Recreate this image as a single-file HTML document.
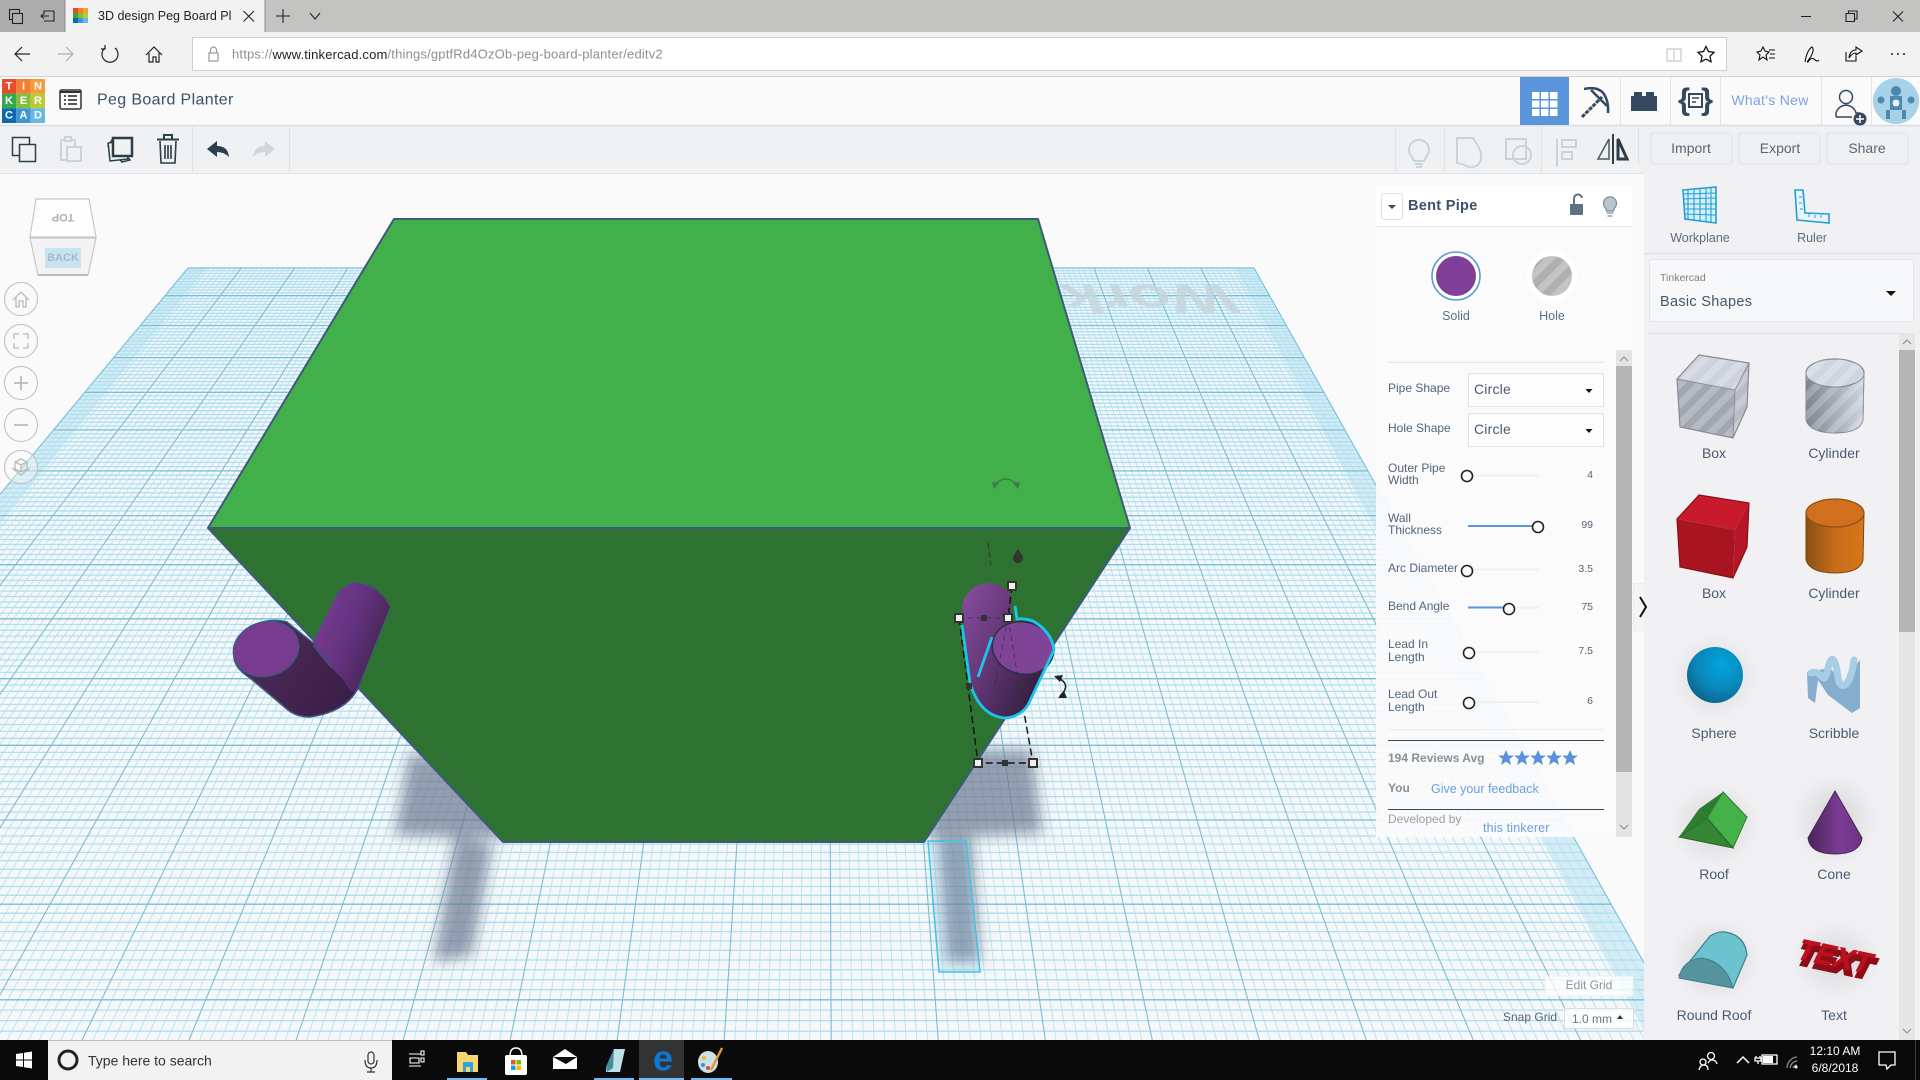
<!DOCTYPE html>
<html lang="en"><head><meta charset="utf-8"><title>3D design Peg Board Planter</title>
<style>
html,body{margin:0;padding:0;width:1920px;height:1080px;overflow:hidden;background:#fafafa}
svg#s{position:absolute;left:0;top:0;display:block}
text{font-family:"Liberation Sans",sans-serif;dominant-baseline:central;white-space:pre}
.c{text-anchor:middle}.r{text-anchor:end}
.lb{font-size:12px;fill:#54657a;transform:translateY(1px)}.v{font-size:10.5px;fill:#54657a;transform:translateY(1px)}
.sh{font-size:14px;fill:#4a5b70;text-anchor:middle}
.k{fill:#fff;stroke:#222;stroke-width:1.6}
.tr{stroke:#eeeff0;stroke-width:2}
.bl{stroke:#5b96dc;stroke-width:2}
.d{fill:none;stroke:#c9d3dc;stroke-width:2}
.tk{fill:none;stroke:#fff;stroke-width:1.3}
.ds{stroke:#111;stroke-width:1.4;stroke-dasharray:7 4;fill:none}
.h{fill:#eee;stroke:#333;stroke-width:2}
.b{fill:#333}
</style></head><body>
<svg id="s" width="1920" height="1080" viewBox="0 0 1920 1080" xmlns="http://www.w3.org/2000/svg">
<defs>
<filter id="bl" x="-30%" y="-30%" width="160%" height="160%"><feGaussianBlur stdDeviation="7"/></filter>
<filter id="gl" x="-50%" y="-50%" width="200%" height="200%"><feGaussianBlur stdDeviation="10"/></filter>
<pattern id="st" width="14" height="14" patternUnits="userSpaceOnUse" patternTransform="rotate(45)"><rect width="7" height="14" fill="#fff" fill-opacity=".22"/></pattern>
<pattern id="st2" width="15" height="15" patternUnits="userSpaceOnUse" patternTransform="rotate(45)"><rect width="15" height="15" fill="#b0b0b0"/><rect width="7.5" height="15" fill="#c4c4c4"/></pattern>
<linearGradient id="p1" x1="0" y1="0" x2="1" y2=".55"><stop offset="0" stop-color="#7e3f98"/><stop offset=".55" stop-color="#643380"/><stop offset="1" stop-color="#42244f"/></linearGradient>
<linearGradient id="p2" x1="0" y1="0" x2="1" y2=".6"><stop offset="0" stop-color="#54305f"/><stop offset="1" stop-color="#381d46"/></linearGradient>
<linearGradient id="p3" x1="0" y1="0" x2="1" y2=".7"><stop offset="0" stop-color="#8a4ea2"/><stop offset=".45" stop-color="#653878"/><stop offset="1" stop-color="#2f1d3a"/></linearGradient>
<linearGradient id="cy" x1="0" x2="1"><stop offset="0" stop-color="#7f8590"/><stop offset="1" stop-color="#cdd3df"/></linearGradient>
<linearGradient id="co" x1="0" x2="1"><stop offset="0" stop-color="#8a4f14"/><stop offset=".5" stop-color="#c56d1b"/><stop offset="1" stop-color="#d8761a"/></linearGradient>
<linearGradient id="cn" x1="0" x2="1"><stop offset="0" stop-color="#4a2459"/><stop offset=".6" stop-color="#7b3d94"/><stop offset="1" stop-color="#6a3380"/></linearGradient>
<radialGradient id="sp" cx=".62" cy=".32" r=".75"><stop offset="0" stop-color="#00a6de"/><stop offset=".6" stop-color="#0a86b8"/><stop offset="1" stop-color="#0c5f88"/></radialGradient>
<polygon id="star" points="0,-8 2.4,-2.5 7.8,-2.5 3.5,1.2 5,7 0,3.7 -5,7 -3.5,1.2 -7.8,-2.5 -2.4,-2.5" fill="#5b93d9"/>
</defs>

<!-- workplane grid -->
<polygon points="188,268 1254,268 1687,1040 -453,1040" fill="#f6f7f8"/>
<polygon points="188,268 207,268 -415,1040 -453,1040" fill="#8fd6ee" fill-opacity=".32"/>
<polygon points="1235,268 1254,268 1687,1040 1649,1040" fill="#8fd6ee" fill-opacity=".32"/>
<path id="gv" fill="none" stroke="#bce5f2" stroke-width="1"/>
<path id="gh" fill="none" stroke="#b0dfef" stroke-width="1.300"/>
<path id="gvm" fill="none" stroke="#78bfd8" stroke-width="1.100"/>
<path id="ghm" fill="none" stroke="#78bfd8" stroke-width="1.300"/>
<text transform="matrix(-.96,0,-.23,-.56,1230,285)" font-size="72" font-weight="bold" fill="#c6d3da" fill-opacity=".8" style="dominant-baseline:alphabetic">Workplane</text>

<!-- shadows on plane -->
<g fill="#65748c" fill-opacity=".68" filter="url(#bl)">
<polygon points="410,752 395,835 510,838 470,770"/>
<polygon points="455,835 492,845 472,955 434,962"/>
<polygon points="955,750 1032,750 1042,833 925,838"/>
<polygon points="938,838 972,838 980,962 946,962"/>
</g>
<polygon points="928,841 966,841 980,972 939,972" fill="#78c8eb" fill-opacity=".14" stroke="#3cc4ea" stroke-width="1.5"/>

<!-- green box -->
<polygon points="394,219 1038,219 1130,528 208,528" fill="#42b04a" stroke="#3f5a7c" stroke-width="2" stroke-linejoin="round"/>
<polygon points="208,528 1130,528 924,842 503,842" fill="#2d7230" stroke="#3f5a7c" stroke-width="2" stroke-linejoin="round"/>

<!-- left pipe -->
<path d="M337,595Q345,583 357,583Q380,586 390,607L357,690Q345,712 310,717Q297,717 288,710L250,678Q233,667 234,655Q236,632 256,624Q272,618 287,622L313,643Z" fill="url(#p2)" stroke="#3f5a7c" stroke-width="1.5"/>
<path d="M337,595Q345,583 357,583Q380,586 390,607L357,690Q350,695 345,682L331,667L313,643Z" fill="url(#p1)"/>
<ellipse cx="266" cy="649" rx="33" ry="27" transform="rotate(-16 266 649)" fill="#783b90" stroke="#3f5a7c" stroke-width="1.4"/>
<path d="M313,645L331,667" stroke="#3f5a7c" stroke-width="1.4"/>

<!-- selected pipe -->
<path d="M962,605Q968,584 988,583Q1005,584 1012,597L1010,625L1050,662L1028,705Q1020,717 1005,718Q980,717 970,683Z" fill="url(#p3)"/>
<ellipse cx="1023" cy="648" rx="31" ry="26" transform="rotate(14 1023 648)" fill="#7f4496" stroke="#2b2f4a" stroke-width="1.5"/>
<path d="M962,625L970,683Q980,716 1005,718Q1020,717 1028,705L1054,650Q1052,632 1033,621Q1024,618 1017,619L1015,606M992,637L978,677" fill="none" stroke="#19c6ec" stroke-width="2.800"/>
<g fill="none" stroke="#3a2347" stroke-width="1" stroke-dasharray="5 4" stroke-opacity=".7"><path d="M959,618H1008M1008,618L994,690M1008,618L1020,690"/></g>
<path class="ds" d="M959,618L978,763H1033L1024,712M1012,586L1008,618"/>
<path d="M988,543L991,565" stroke="#333" stroke-width="1" stroke-dasharray="6 3"/>
<path d="M1018,549Q1013,556 1013,558a5,5 0 0 0 10,0Q1023,556 1018,549Z" fill="#333"/>
<path d="M994,486Q1006,472 1018,486" fill="none" stroke="#3f7a4a" stroke-width="1.5"/><path d="M992,482l7,1-5,6zM1020,482l-7,1 5,6z" fill="#3f7a4a"/>
<path d="M1056,677Q1073,684 1060,696" fill="none" stroke="#222" stroke-width="1.5"/><path d="M1054,676l9,-1-3,7zM1058,698l6,-7 3,7z" fill="#222"/>
<g class="h"><rect x="955" y="614" width="8" height="8"/><rect x="1004" y="614" width="8" height="8"/><rect x="1008" y="582" width="8" height="8"/><rect x="974" y="759" width="8" height="8"/><rect x="1029" y="759" width="8" height="8"/></g>
<g class="b"><rect x="981" y="615" width="6" height="6"/><rect x="966" y="683" width="6" height="6"/><rect x="1016" y="683" width="6" height="6"/><rect x="1002" y="760" width="6" height="6"/></g>

<!-- left nav -->
<path d="M36,199H89L96,237H30Z" fill="#fdfdfd" stroke="#c8c8c8" stroke-width="1.2"/>
<path d="M30,238H96L88,275H38Z" fill="#f3f3f3" stroke="#c8c8c8" stroke-width="1.2"/><path d="M38,275H88" stroke="#bbb" stroke-width="2"/>
<rect x="45" y="248" width="36" height="20" fill="#c8e4f2"/>
<text x="63" y="217" class="c" font-size="11" font-weight="bold" fill="#aab0b8" transform="rotate(180 63 217)">TOP</text>
<text x="63" y="258" class="c" font-size="11" font-weight="bold" fill="#a8b8c6">BACK</text>
<g fill="#fafafa" fill-opacity=".4" stroke="#bcbcbc" stroke-width="1"><circle cx="21" cy="299" r="16.5"/><circle cx="21" cy="341" r="16.5"/><circle cx="21" cy="383" r="16.5"/><circle cx="21" cy="425" r="16.5"/><circle cx="21" cy="467" r="16.5"/></g>
<g fill="none" stroke="#bbb" stroke-width="1.3"><path d="M13,300L21,292L29,300M16,298V307H19V301H23V307H26V298"/><path d="M14,339V334H19M23,334H28V339M28,343V348H23M19,348H14V343"/><path d="M14,383H28M21,376V390" stroke-width="1.8"/><path d="M14,425H28" stroke-width="1.8"/><path d="M21,459L27,462V469L21,472L15,469V462ZM15,462L21,465L27,462M21,465V472M12,468L21,475L30,468"/></g>

<!-- Edit grid / snap -->
<rect x="1545" y="976" width="88" height="20" rx="2" fill="#fff" fill-opacity=".75" stroke="#f0f0f0"/>
<text x="1589" y="985" class="c" font-size="12" fill="#8a96a4">Edit Grid</text>
<text x="1503" y="1017" font-size="12" fill="#54657a">Snap Grid</text>
<rect x="1564.5" y="1008.5" width="69" height="20" fill="#fff" fill-opacity=".8" stroke="#ddd"/>
<text x="1572" y="1019" font-size="12" fill="#6a7684">1.0 mm</text><path d="M1617,1019l3,-4 3,4z" fill="#333"/>

<!-- inspector -->
<rect x="1376" y="186" width="256" height="651" fill="#fbfbfc" fill-opacity=".93"/>
<rect x="1376" y="186" width="256" height="40" fill="#fff"/><path d="M1376,226.5H1632" stroke="#e2e4e8"/>
<rect x="1381.5" y="193.5" width="21" height="26" rx="3" fill="#fff" stroke="#dfe1e5"/>
<path d="M1388,205h8l-4,4z" fill="#34495e"/>
<text x="1408" y="206" font-size="14.5" font-weight="bold" fill="#3c5068" letter-spacing=".3">Bent Pipe</text>
<rect x="1570" y="204" width="13" height="11" rx="1" fill="#5d7285"/><path d="M1574,204V199a4,4 0 0 1 8,-1" fill="none" stroke="#5d7285" stroke-width="2"/>
<path d="M1605.500,208a6.500,6.500 0 1 1 9,0l-1,3h-7ZM1606.500,213h7M1607.500,216h5" fill="#b9c4cc" stroke="#7a8a98" stroke-width="1.200"/>
<circle cx="1456" cy="276" r="24" fill="#fff" stroke="#5b96dc" stroke-width="1.6"/><circle cx="1456" cy="276" r="20" fill="#7f3f98"/>
<circle cx="1552" cy="276" r="25" fill="#fff"/><circle cx="1552" cy="276" r="20" fill="url(#st2)"/>
<text x="1456" y="316" class="c" font-size="12.5" fill="#5f6f80">Solid</text><text x="1552" y="316" class="c" font-size="12.5" fill="#5f6f80">Hole</text>
<path d="M1388,362.5H1604" stroke="#e5e6e8"/>
<text x="1388" y="387" class="lb">Pipe Shape</text><text x="1388" y="427" class="lb">Hole Shape</text>
<rect x="1468.5" y="373.5" width="135" height="33" fill="#fff" fill-opacity=".6" stroke="#dfe2e8"/><rect x="1468.5" y="413.5" width="135" height="33" fill="#fff" fill-opacity=".6" stroke="#dfe2e8"/>
<text x="1474" y="389" font-size="14" fill="#4a5b70" letter-spacing=".2">Circle</text><text x="1474" y="429" font-size="14" fill="#4a5b70" letter-spacing=".2">Circle</text>
<path d="M1585.500,389h7l-3.500,4zM1585.500,429h7l-3.500,4z" fill="#111"/>
<g><text x="1388" y="467" class="lb">Outer Pipe</text><text x="1388" y="479" class="lb">Width</text><text x="1388" y="517" class="lb">Wall</text><text x="1388" y="529" class="lb">Thickness</text><text x="1388" y="567" class="lb">Arc Diameter</text><text x="1388" y="605" class="lb">Bend Angle</text><text x="1388" y="643" class="lb">Lead In</text><text x="1388" y="656" class="lb">Length</text><text x="1388" y="693" class="lb">Lead Out</text><text x="1388" y="706" class="lb">Length</text></g>
<g class="tr"><path d="M1468,475.500H1538M1468,526H1538M1468,569.500H1538M1468,607.500H1538M1468,652H1538M1468,702H1538"/></g>
<g class="bl"><path d="M1468,526H1534M1468,607.500H1504"/></g>
<g class="k"><circle cx="1467" cy="476" r="5.500"/><circle cx="1538" cy="527" r="5.500"/><circle cx="1467" cy="571" r="5.500"/><circle cx="1509" cy="609" r="5.500"/><circle cx="1469" cy="653" r="5.500"/><circle cx="1469" cy="703" r="5.500"/></g>
<g><text x="1593" y="474" class="r v">4</text><text x="1593" y="524" class="r v">99</text><text x="1593" y="568" class="r v">3.5</text><text x="1593" y="606" class="r v">75</text><text x="1593" y="650" class="r v">7.5</text><text x="1593" y="700" class="r v">6</text></g>
<path d="M1388,729.500H1604" stroke="#ecedef"/><path d="M1388,740.500H1604M1388,809.500H1604" stroke="#34495e"/>
<text x="1388" y="758" font-size="12" font-weight="bold" fill="#8a9097">194 Reviews Avg</text>
<use href="#star" x="1506" y="758"/><use href="#star" x="1522" y="758"/><use href="#star" x="1538" y="758"/><use href="#star" x="1554" y="758"/><use href="#star" x="1570" y="758"/>
<text x="1388" y="788" font-size="12" font-weight="bold" fill="#8a9097">You</text>
<text x="1431" y="789" font-size="12.500" fill="#6a9fe0">Give your feedback</text>
<text x="1388" y="819" font-size="12" fill="#9a9ea5">Developed by</text>
<text x="1483" y="828" font-size="12.500" fill="#6a9fe0" letter-spacing=".15">this tinkerer</text>
<rect x="1616" y="350" width="16" height="487" fill="#e4e4e4"/><rect x="1616" y="366" width="16" height="406" fill="#b5b5b5"/>
<path d="M1620,361l4,-4 4,4M1620,825l4,4 4,-4" fill="none" stroke="#8a8a8a"/>
<rect x="1634" y="584" width="16" height="47" fill="#f5f5f7" stroke="#e4e4e6"/>

<!-- right sidebar -->
<rect x="1644" y="173" width="276" height="867" fill="#f1f1f4"/>
<rect x="1634" y="584" width="10" height="47" fill="#f5f5f7"/><path d="M1640,597L1646,607L1640,617" fill="none" stroke="#111" stroke-width="2"/>
<path d="M1644,253.500H1920M1649,333.500H1899" stroke="#dfe0e3"/>
<g fill="none" stroke="#1fa0d6" stroke-width="1.1"><path d="M1683,190L1716,187V223L1685,219Z" fill="#d8eef8" stroke-width="1.600"/><path d="M1683,194L1716,193M1683,199L1716,198M1684,204L1716,204M1684,209L1716,209M1684,214L1716,215M1688,190V219M1694,189V220M1700,188V221M1706,188V222M1711,188V222"/></g>
<path d="M1795,190H1803L1805,213L1829,214V223L1797,220Z" fill="#e8f5fb" stroke="#1fa0d6" stroke-width="1.600"/><path d="M1799,197h3M1799,203h3M1800,209h3M1809,214v3M1815,215v3M1821,215v3" stroke="#1fa0d6"/>
<text x="1700" y="238" class="c" font-size="12.500" fill="#5b6d80">Workplane</text><text x="1812" y="238" class="c" font-size="12.500" fill="#5b6d80">Ruler</text>
<rect x="1649.500" y="259.500" width="264" height="62" rx="3" fill="#f7f8f9" stroke="#e4e5e8"/>
<text x="1660" y="278" font-size="10.500" fill="#7f7f7f">Tinkercad</text>
<text x="1660" y="302" font-size="14.500" fill="#45566a" letter-spacing=".3">Basic Shapes</text>
<path d="M1886,291h10l-5,5z" fill="#111"/>
<rect x="1899" y="333" width="16" height="707" fill="#e6e6e6"/><rect x="1899" y="350" width="16" height="282" fill="#b5b5b5"/>
<path d="M1903,344l4,-4 4,4M1903,1029l4,4 4,-4" fill="none" stroke="#8a8a8a"/>

<!-- shapes -->
<polygon points="1699,355 1749,363 1735,390 1677,379" fill="#cdd2dd"/><polygon points="1677,379 1735,390 1733,438 1680,427" fill="#a2a7b2"/><polygon points="1735,390 1749,363 1747,407 1733,438" fill="#b8bdc8"/>
<polygon points="1699,355 1749,363 1747,407 1733,438 1680,427 1677,379" fill="url(#st)" stroke="#858a94" stroke-width="1.200"/><path d="M1677,379L1735,390L1749,363M1735,390L1733,438" fill="none" stroke="#8a8f99"/>
<path d="M1806,373V420Q1810,433 1835,433Q1860,433 1863,420L1864,373Z" fill="url(#cy)" stroke="#7f848e"/><path d="M1806,373V420Q1810,433 1835,433Q1860,433 1863,420L1864,373Z" fill="url(#st)"/>
<ellipse cx="1835" cy="373" rx="29" ry="14" fill="#d0d5e0" stroke="#858a94" stroke-width="1.200"/><ellipse cx="1835" cy="373" rx="29" ry="14" fill="url(#st)"/>
<polygon points="1699,495 1749,503 1735,530 1677,519" fill="#c81a2b"/><polygon points="1677,519 1735,530 1733,578 1680,567" fill="#a8141f"/><polygon points="1735,530 1749,503 1747,547 1733,578" fill="#b41725"/>
<polygon points="1699,495 1749,503 1747,547 1733,578 1680,567 1677,519" fill="none" stroke="#8d0f1a" stroke-width="1.200"/>
<path d="M1806,513V560Q1810,573 1835,573Q1860,573 1863,560L1864,513Z" fill="url(#co)" stroke="#7a4512"/><ellipse cx="1835" cy="513" rx="29" ry="14" fill="#d0701c" stroke="#8a4f14" stroke-width="1.200"/>
<text x="1714" y="453" class="sh">Box</text><text x="1834" y="453" class="sh">Cylinder</text><text x="1714" y="593" class="sh">Box</text><text x="1834" y="593" class="sh">Cylinder</text>
<g fill="#000" fill-opacity=".08" filter="url(#gl)"><circle cx="1715" cy="677" r="30"/><ellipse cx="1715" cy="825" rx="32" ry="30"/><ellipse cx="1835" cy="820" rx="30" ry="34"/><ellipse cx="1715" cy="960" rx="32" ry="30"/><ellipse cx="1836" cy="960" rx="32" ry="26"/></g>
<circle cx="1715" cy="675" r="28" fill="url(#sp)"/>
<polygon points="1807,672 1808,698 1815,703 1818,680 1828,695 1852,713 1860,708 1860,660 1852,670 1845,685 1830,668" fill="#86adcd"/>
<path d="M1811,673C1822,668 1824,690 1828,668C1832,652 1836,660 1838,678C1840,690 1850,690 1854,660" fill="none" stroke="#a8cde6" stroke-width="7" stroke-linecap="round"/>
<polygon points="1723,792 1747,817 1733,848 1707,818" fill="#44b14a" stroke="#2d7a30"/><polygon points="1723,792 1707,818 1699,809" fill="#2d7a30"/><polygon points="1679,837 1707,818 1733,848" fill="#368535" stroke="#256628"/><polygon points="1699,809 1707,818 1679,837" fill="#2f7d32"/>
<path d="M1835,791L1808,838Q1810,854 1835,854Q1860,854 1862,838Z" fill="url(#cn)" stroke="#4a2459"/>
<path d="M1679,975L1710,936Q1718,931 1725,932Q1745,935 1747,955L1733,988L1680,978Z" fill="#6cc3cf" stroke="#3f7f8c" stroke-width="1.200"/>
<path d="M1679,978Q1682,960 1702,958Q1726,962 1733,988Z" fill="#55939f" stroke="#3f7f8c"/>
<text transform="translate(1836,962) rotate(12) skewX(-15)" class="c" font-size="29" font-weight="bold" fill="#8d0c16" stroke="#8d0c16" stroke-width="4">TEXT</text>
<text transform="translate(1835,957) rotate(12) skewX(-15)" class="c" font-size="29" font-weight="bold" fill="#bb1020" stroke="#bb1020" stroke-width=".8">TEXT</text>
<text x="1714" y="733" class="sh">Sphere</text><text x="1834" y="733" class="sh">Scribble</text><text x="1714" y="874" class="sh">Roof</text><text x="1834" y="874" class="sh">Cone</text><text x="1714" y="1015" class="sh">Round Roof</text><text x="1834" y="1015" class="sh">Text</text>

<!-- toolbar -->
<rect x="0" y="126" width="1920" height="47" fill="#f0f1f3"/><path d="M0,173.500H1644" stroke="#e2e3e6"/>
<path d="M192.500,126V173M289.500,126V173M1395.500,126V173M1444.500,126V173M1541.500,126V173M1638.500,126V165" stroke="#e0e2e6"/>
<g fill="#f0f1f3" stroke="#2c3e46" stroke-width="1.500"><rect x="12.500" y="137.500" width="17" height="18"/><rect x="19.500" y="144.500" width="16" height="17"/></g>
<g fill="#f0f1f3" stroke="#c9d3dc" stroke-width="2"><rect x="61" y="140" width="14" height="20"/><rect x="67" y="147" width="14" height="14"/><rect x="65" y="137" width="6" height="4"/></g>
<g fill="#f0f1f3" stroke="#2c3e46"><path d="M108,146L122,162L130,160L112,140Z" stroke-width="1.500"/><rect x="109" y="142" width="18" height="18" stroke-width="1.500" transform="rotate(-6 118 151)"/><rect x="113" y="138" width="19" height="18" stroke-width="2.500"/></g>
<g fill="none" stroke="#2c3e46" stroke-width="2"><path d="M157,139.500H179M164,139V135H172V139"/><path d="M160,141L161,163H175L176,141M165,145V159M168,145V159M171,145V159" stroke-width="1.600"/></g>
<path d="M207,149L217,141V146Q228,146 229,157Q224,152 217,152V157Z" fill="#2c3e50"/>
<path d="M275,149L265,141V146Q254,146 253,157Q258,152 265,152V157Z" fill="#cfd8df"/>
<path d="M1412,157a10,10 0 1 1 14,0l-2,4h-10ZM1415,164h8M1416,167h6" class="d"/>
<path d="M1457,138H1473Q1481,150 1481,155A10,10 0 0 1 1465,165L1457,163Z" class="d"/>
<rect x="1506" y="139" width="20" height="20" class="d"/><circle cx="1522" cy="155" r="9" class="d" fill="#f0f1f3"/>
<path d="M1557,139V167" class="d"/><rect x="1562" y="140" width="14" height="7" class="d"/><rect x="1562" y="152" width="10" height="7" class="d"/>
<path d="M1598,159H1609V139Z" fill="none" stroke="#4a5a62" stroke-width="1.500"/><path d="M1613,134V164" stroke="#2c3e46" stroke-width="2"/><path d="M1618,139V159H1627Z" fill="none" stroke="#2c3e46" stroke-width="3"/>
<g fill="#f0f1f3" stroke="#e0e2e6"><rect x="1651" y="133" width="81" height="31" rx="3"/><rect x="1739" y="133" width="81" height="31" rx="3"/><rect x="1827" y="133" width="81" height="31" rx="3"/></g>
<g font-size="14" fill="#5a6775"><text x="1691" y="148" class="c">Import</text><text x="1780" y="148" class="c">Export</text><text x="1867" y="148" class="c">Share</text></g>

<!-- tinkercad header -->
<rect x="0" y="76" width="1920" height="50" fill="#fafafa"/><path d="M0,76.500H1920" stroke="#d4d4d4"/><path d="M0,125.500H1920" stroke="#dcdde1" stroke-width="1.500"/>
<g font-size="11" font-weight="bold" fill="#fff">
<rect x="2" y="79" width="14.300" height="14.600" fill="#ea4a2b"/><rect x="16.300" y="79" width="14.300" height="14.600" fill="#f47e31"/><rect x="30.600" y="79" width="14.400" height="14.600" fill="#f59c3c"/>
<rect x="2" y="93.600" width="14.300" height="14.600" fill="#35a84a"/><rect x="16.300" y="93.600" width="14.300" height="14.600" fill="#82bf40"/><rect x="30.600" y="93.600" width="14.400" height="14.600" fill="#b6cc2f"/>
<rect x="2" y="108.200" width="14.300" height="14.800" fill="#0c68b0"/><rect x="16.300" y="108.200" width="14.300" height="14.800" fill="#3f97d0"/><rect x="30.600" y="108.200" width="14.400" height="14.800" fill="#6ab7e0"/>
<text x="9" y="86.500" class="c">T</text><text x="23.500" y="86.500" class="c">I</text><text x="38" y="86.500" class="c">N</text><text x="9" y="101" class="c">K</text><text x="23.500" y="101" class="c">E</text><text x="38" y="101" class="c">R</text><text x="9" y="115.500" class="c">C</text><text x="23.500" y="115.500" class="c">A</text><text x="38" y="115.500" class="c">D</text></g>
<rect x="60" y="90" width="21" height="19" rx="1.500" fill="none" stroke="#333" stroke-width="1.500"/><path d="M60,92H81" stroke="#333" stroke-width="2"/><path d="M64,96h2M68,96h9M64,100h2M68,100h9M64,104h2M68,104h9" stroke="#222" stroke-width="1.600"/>
<text x="97" y="100" font-size="16" fill="#3c5068" letter-spacing=".35">Peg Board Planter</text>
<rect x="1520" y="77" width="49" height="48" fill="#5b96dc"/>
<g fill="#fff"><rect x="1532" y="92" width="7.500" height="7"/><rect x="1541" y="92" width="7.500" height="7"/><rect x="1550" y="92" width="7.500" height="7"/><rect x="1532" y="100.500" width="7.500" height="7"/><rect x="1541" y="100.500" width="7.500" height="7"/><rect x="1550" y="100.500" width="7.500" height="7"/><rect x="1532" y="109" width="7.500" height="7"/><rect x="1541" y="109" width="7.500" height="7"/><rect x="1550" y="109" width="7.500" height="7"/></g>
<path d="M1620.500,77V125M1670.500,77V125M1720.500,77V125M1821.500,77V125M1871.500,77V125" stroke="#e3e4e7"/>
<path d="M1582,117L1602,97" stroke="#34495e" stroke-width="3" stroke-dasharray="4 1"/><path d="M1584,89Q1598,86 1604,94Q1609,102 1608,113M1591,90L1607,106" fill="none" stroke="#34495e" stroke-width="2.500"/>
<g fill="#34495e"><rect x="1631" y="96" width="26" height="15"/><rect x="1634" y="92" width="8" height="5"/><rect x="1646" y="92" width="8" height="5"/></g>
<text x="1684" y="99" class="c" font-size="31" font-weight="bold" fill="#34495e">{</text><text x="1707" y="99" class="c" font-size="31" font-weight="bold" fill="#34495e">}</text>
<rect x="1689" y="94" width="13" height="13" fill="none" stroke="#34495e" stroke-width="2"/><path d="M1692,98h7M1692,102h4" stroke="#34495e" stroke-width="1.500"/>
<text x="1770" y="100" class="c" font-size="14" fill="#7ba3e6" letter-spacing=".3">What's New</text>
<circle cx="1846" cy="97" r="6.500" fill="none" stroke="#34495e" stroke-width="1.500"/><path d="M1836,117V113Q1838,106 1846,105Q1854,106 1856,113H1860M1836,117H1852" fill="none" stroke="#34495e" stroke-width="1.500"/>
<circle cx="1860" cy="119" r="6.500" fill="#34495e"/><path d="M1860,115v8M1856,119h8" stroke="#fff" stroke-width="1.500"/>
<circle cx="1896" cy="101" r="23" fill="#a6d3e8"/>
<g fill="#2f6f9e" fill-opacity=".75"><circle cx="1896" cy="91" r="5"/><rect x="1890" y="96" width="12" height="14"/><circle cx="1881" cy="100" r="3.500"/><circle cx="1911" cy="100" r="3.500"/><rect x="1886" y="110" width="4" height="9"/><rect x="1902" y="110" width="4" height="9"/></g><circle cx="1896" cy="103" r="3.500" fill="#e8f3f9"/>

<!-- nav bar -->
<rect x="0" y="32" width="1920" height="44" fill="#f2f2f2"/>
<rect x="192.500" y="37.500" width="1534" height="33" fill="#fff" stroke="#cfcfcf"/>
<g fill="none" stroke="#222" stroke-width="1.200"><path d="M30,54H15M22,47L15,54L22,61"/><path d="M58,54H73M66,47L73,54L66,61" stroke="#b0b0b0"/><path d="M105,48A8,8 0 1 0 115,48M105,45V49H101"/><path d="M146,55L154,47L162,55M149,53V62H153V57H156V62H159V53"/></g>
<g fill="none" stroke="#9a9a9a" stroke-width="1.200"><rect x="209" y="53" width="9" height="8"/><path d="M210.500,53V50a3,3 0 0 1 6,0V53"/></g>
<text x="232" y="54" font-size="13" fill="#8e8e8e" letter-spacing=".18">https://<tspan fill="#222">www.tinkercad.com</tspan>/things/gptfRd4OzOb-peg-board-planter/editv2</text>
<g fill="none" stroke="#d0d0d0" stroke-width="1.400"><path d="M1667,49H1674V61H1667ZM1674,49H1681V61H1674Z"/></g>
<path d="M1706,46.500L1708.500,51.500L1714,52.300L1710,56.200L1711,61.800L1706,59.100L1701,61.800L1702,56.200L1698,52.300L1703.500,51.500Z" fill="none" stroke="#111" stroke-width="1.300"/>
<path d="M1763,47L1765,51L1769,52L1766,55L1767,60L1763,57L1759,60L1760,55L1757,52L1761,51ZM1769,50H1775M1770,54H1775M1769,58H1775" fill="none" stroke="#111" stroke-width="1.100"/>
<path d="M1805,62Q1807,50 1812,47Q1815,50 1810,58Q1806,63 1808,62Q1812,56 1815,60Q1818,62 1819,60" fill="none" stroke="#111" stroke-width="1.100"/>
<path d="M1846,52V61H1856V56M1849,58Q1850,50 1856,50V47L1862,51L1856,55V53Q1852,53 1849,58Z" fill="none" stroke="#111" stroke-width="1.100"/>
<g fill="#222"><circle cx="1892" cy="54" r="1"/><circle cx="1898" cy="54" r="1"/><circle cx="1904" cy="54" r="1"/></g>

<!-- title bar -->
<rect x="0" y="0" width="1920" height="32" fill="#c3c3c1"/><rect x="0" y="0" width="65" height="32" fill="#adadad"/>
<rect x="65" y="0" width="200" height="32" fill="#f2f2f2"/><path d="M65,0V32M265,0V32" stroke="#8c8c8c"/>
<g fill="none" stroke="#222" stroke-width="1.100"><rect x="9.500" y="9.500" width="10" height="10"/><rect x="12.500" y="13.500" width="10" height="10" fill="#adadad"/><path d="M54,11H44V14M44,21H54V11M41,16H49M44,13.500L41,16L44,18.500"/><path d="M243.500,11L254,21.500M254,11L243.500,21.500"/><path d="M276,16H290M283,9V23"/><path d="M310,13L315,19L320,13"/></g>
<g><rect x="73" y="8" width="5" height="5" fill="#ea4a2b"/><rect x="78" y="8" width="5" height="5" fill="#f47e31"/><rect x="83" y="8" width="5" height="5" fill="#f59c3c"/><rect x="73" y="13" width="5" height="5" fill="#35a84a"/><rect x="78" y="13" width="5" height="5" fill="#82bf40"/><rect x="83" y="13" width="5" height="5" fill="#b6cc2f"/><rect x="73" y="18" width="5" height="5" fill="#0c68b0"/><rect x="78" y="18" width="5" height="5" fill="#3f97d0"/><rect x="83" y="18" width="5" height="5" fill="#6ab7e0"/></g>
<svg x="98" y="0" width="134" height="32"><text x="0" y="16" font-size="12.500" fill="#222">3D design Peg Board Planter</text></svg>
<path d="M1801,16.500H1811M1846,13.500H1854.500V21.500H1846ZM1848.500,13V11H1857V19H1855M1893,11.500L1903,21.500M1903,11.500L1893,21.500" fill="none" stroke="#222" stroke-width="1.100"/>

<!-- taskbar -->
<rect x="0" y="1040" width="1920" height="40" fill="#0a0a0a"/>
<g fill="#fff"><path d="M16,1054L23,1053V1059.500H16ZM24,1052.800L32,1051.500V1059.500H24ZM16,1060.500H23V1067L16,1066ZM24,1060.500H32V1068.500L24,1067.200Z"/></g>
<rect x="48" y="1040" width="344" height="40" fill="#f2f2f2"/><path d="M48,1040.500H392" stroke="#bdbdbd"/>
<circle cx="68" cy="1060" r="9" fill="none" stroke="#222" stroke-width="3"/>
<text x="88" y="1060.500" font-size="14" fill="#333">Type here to search</text>
<g fill="none" stroke="#333" stroke-width="1.200"><rect x="368" y="1052" width="6" height="12" rx="3"/><path d="M365,1060Q365,1068 371,1068Q377,1068 377,1060M371,1068V1072M367,1072H375"/></g>
<g fill="none" stroke="#fff" stroke-width="1.100"><path d="M409,1054H421M409,1066H421M421,1051H424V1055H421ZM421,1058H424V1062H421ZM410,1058H419V1063H410Z"/></g>
<path d="M457,1052H466L468,1055H478V1072H457Z" fill="#f9d66c"/><rect x="463" y="1062" width="10" height="10" fill="#2ea3e3"/><rect x="466" y="1067" width="4" height="5" fill="#f9d66c"/>
<rect x="505" y="1055" width="22" height="20" rx="2" fill="#fff"/><path d="M510,1056Q510,1048 516,1048Q522,1048 522,1056" fill="none" stroke="#fff" stroke-width="1.400"/><rect x="511" y="1060" width="4.500" height="4.500" fill="#f25022"/><rect x="516.500" y="1060" width="4.500" height="4.500" fill="#7fba00"/><rect x="511" y="1065.500" width="4.500" height="4.500" fill="#00a4ef"/><rect x="516.500" y="1065.500" width="4.500" height="4.500" fill="#ffb900"/>
<path d="M553,1057L565,1049L577,1057V1069H553Z" fill="#fff"/><path d="M553,1057L577,1057L566,1064Z" fill="#0a0a0a"/>
<path d="M606,1067L614,1049H625L620,1072H606Z" fill="#bfe0e6"/><path d="M606,1067L614,1049L613,1068L607,1072Z" fill="#3f8f9c"/>
<rect x="639" y="1040" width="45" height="40" fill="#333"/>
<text x="663" y="1058" class="c" font-size="36" font-weight="bold" fill="#0f78d4">e</text>
<ellipse cx="708" cy="1062" rx="10" ry="11" fill="#cfe0e5"/><circle cx="704" cy="1058" r="2" fill="#e8b83a"/><circle cx="708" cy="1068" r="2" fill="#d94b3a"/><circle cx="703" cy="1065" r="2" fill="#3f8fd0"/><path d="M711,1070L722,1048" stroke="#d89a3a" stroke-width="2.500"/>
<g fill="#76b9ed"><rect x="447" y="1078" width="40" height="2"/><rect x="594" y="1078" width="40" height="2"/><rect x="639" y="1078" width="45" height="2"/><rect x="691" y="1078" width="41" height="2"/></g>
<g class="tk"><circle cx="1711" cy="1056" r="3.500"/><circle cx="1703" cy="1062" r="3"/><path d="M1699,1070Q1700,1065 1704,1065Q1708,1065 1708,1070M1708,1063Q1710,1060 1712,1060Q1716,1060 1717,1064"/><path d="M1737,1063L1743,1057L1749,1063" stroke-width="1.500"/><rect x="1762" y="1055" width="15" height="9"/><path d="M1756,1056v2M1760,1056v2M1755,1058h6v3h-6zM1758,1061v3"/><path d="M1787,1068A11,11 0 0 1 1797,1057M1790,1068A8,8 0 0 1 1797,1061M1793,1068A5,5 0 0 1 1797,1065" stroke="#8a8a8a"/><path d="M1879,1052H1895V1065H1891L1887,1069L1886,1065H1879Z"/></g>
<rect x="1763" y="1056" width="10" height="7" fill="#fff"/><circle cx="1796" cy="1067" r="1.500" fill="#fff"/>
<text x="1835" y="1051" class="c" font-size="12" fill="#fff">12:10 AM</text><text x="1835" y="1068" class="c" font-size="12" fill="#fff">6/8/2018</text>
<path d="M1915.500,1040V1080" stroke="#3a3a3a"/>
</svg>
<script>
(function(){
var h='',hm='',v='',vm='',i,y,k,xl,xr,x0,x1;
for(i=0;i<=200;i++){
  y=-498+766/(1-.0349*i/10);
  if(y>1042)break;
  k=(y+498)/766;xl=824-636*k;xr=824+430*k;
  var d='M'+xl.toFixed(1)+' '+y.toFixed(1)+'H'+xr.toFixed(1);
  if(i%10===0)hm+=d;else h+=d;
}
for(i=0;i<=200;i++){
  x0=188+5.33*i;x1=824+(x0-824)*(1538/766);
  var e='M'+x0.toFixed(1)+' 268L'+x1.toFixed(1)+' 1040';
  if(i%10===0)vm+=e;else v+=e;
}
document.getElementById('gh').setAttribute('d',h);
document.getElementById('ghm').setAttribute('d',hm);
document.getElementById('gv').setAttribute('d',v);
document.getElementById('gvm').setAttribute('d',vm);
})();
</script>
</body></html>
